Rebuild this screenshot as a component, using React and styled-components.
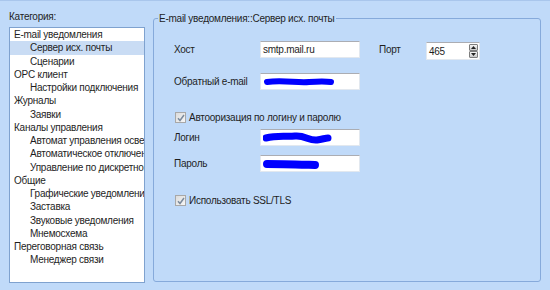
import styled, { createGlobalStyle } from 'styled-components';

const Global = createGlobalStyle`
  body {
    margin: 0;
    background: #c0daf9;
  }
`;

const Window = styled.div`
  width: 550px;
  height: 290px;
  box-sizing: border-box;
  border-top: 1px solid #a9c6ec;
  background: #c0daf9;
  display: flex;
  padding: 0 9px;
  font-family: "Liberation Sans", Arial, sans-serif;
  font-size: 10px;
  letter-spacing: -0.25px;
  color: #1e1e1e;
`;

const Side = styled.div`
  width: 136px;
  flex: none;
  display: flex;
  flex-direction: column;
`;

const Caption = styled.div`
  line-height: 13px;
  margin-top: 9px;
  height: 13px;
`;

const ListBox = styled.div`
  margin-top: 4px;
  height: 256px;
  box-sizing: border-box;
  border: 1px solid #7fa2cf;
  background: #fff;
  overflow: hidden;
`;

const Item = styled.div`
  height: 13.25px;
  line-height: 13px;
  white-space: nowrap;
  overflow: hidden;
  padding-left: ${p => (p.$child ? 20 : 4)}px;
  background: ${p => (p.$active ? '#c9dcf4' : 'transparent')};
`;

const Group = styled.fieldset`
  margin: 11px 0 0 8px;
  padding: 0;
  width: 388px;
  flex: none;
  height: 270px;
  box-sizing: border-box;
  border: 1px solid #86aadb;
  border-radius: 3px;
  min-inline-size: 0;
`;

const Legend = styled.legend`
  margin-left: 4px;
  padding: 0 2px 0 1px;
  line-height: 13px;
  height: 13px;
`;

const Form = styled.div`
  display: flex;
  flex-direction: column;
  padding-left: 20px;
`;

const Row = styled.div`
  display: flex;
  align-items: center;
  height: 17px;
  margin-top: ${p => p.$top || 0}px;
`;

const Label = styled.div`
  width: ${p => p.$w || 86}px;
  padding-left: ${p => p.$pad || 0}px;
  flex: none;
`;

const Field = styled.div`
  width: ${p => p.$w || 100}px;
  height: ${p => p.$h || 17}px;
  box-sizing: border-box;
  border: 1px solid #e2e8ef;
  border-top-color: #abadb3;
  background: #fff;
  display: flex;
  align-items: center;
  padding-left: 2px;
  flex: none;
  margin-top: ${p => p.$top || 0}px;
  overflow: hidden;
`;

const SpinText = styled.span`
  flex: 1;
`;

const SpinButtons = styled.div`
  width: 9px;
  height: 14px;
  margin-right: 1px;
  display: flex;
  flex-direction: column;
  flex: none;
`;

const SpinBtn = styled.div`
  height: 7px;
  box-sizing: border-box;
  border: 1px solid #7d7d7d;
  border-radius: 1px;
  background: linear-gradient(#f6f6f6, #c9c9c9);
  display: flex;
  align-items: center;
  justify-content: center;
`;

const Check = styled.div`
  display: flex;
  align-items: center;
  gap: 3px;
  padding-left: 1px;
  height: 13px;
  margin-top: ${p => p.$top || 0}px;
`;

const Box = styled.span`
  width: 11px;
  height: 11px;
  box-sizing: border-box;
  border: 1px solid #a8a8a8;
  background: linear-gradient(135deg, #dcdcdc, #f6f6f6);
  display: flex;
  align-items: center;
  justify-content: center;
`;

const items = [
  { t: 'E-mail уведомления' },
  { t: 'Сервер исх. почты', c: 1, a: 1 },
  { t: 'Сценарии', c: 1 },
  { t: 'OPC клиент' },
  { t: 'Настройки подключения', c: 1 },
  { t: 'Журналы' },
  { t: 'Заявки', c: 1 },
  { t: 'Каналы управления' },
  { t: 'Автомат управления освещением', c: 1 },
  { t: 'Автоматическое отключение', c: 1 },
  { t: 'Управление по дискретному входу', c: 1 },
  { t: 'Общие' },
  { t: 'Графические уведомления', c: 1 },
  { t: 'Заставка', c: 1 },
  { t: 'Звуковые уведомления', c: 1 },
  { t: 'Мнемосхема', c: 1 },
  { t: 'Переговорная связь' },
  { t: 'Менеджер связи', c: 1 },
];

function Tick() {
  return (
    <svg width="8" height="8" viewBox="0 0 8 8">
      <path d="M1 4.2 L3 6.5 L7 1" fill="none" stroke="#7b8a9c" strokeWidth="1.5" />
    </svg>
  );
}

function Scribble({ d, w, h = 14, sw = 6 }) {
  return (
    <svg width={w} height={h} viewBox={`0 0 ${w} ${h}`}>
      <path d={d} fill="none" stroke="#0000ff" strokeWidth={sw} strokeLinecap="round" strokeLinejoin="round" />
    </svg>
  );
}

export default function App() {
  return (
    <>
      <Global />
      <Window>
        <Side>
          <Caption>Категория:</Caption>
          <ListBox>
            {items.map((it, i) => (
              <Item key={i} $child={it.c} $active={it.a}>
                {it.t}
              </Item>
            ))}
          </ListBox>
        </Side>

        <Group>
          <Legend>E-mail уведомления::Сервер исх. почты</Legend>
          <Form>
            <Row $top={16}>
              <Label>Хост</Label>
              <Field>smtp.mail.ru</Field>
              <Label $w={47} $pad={19}>Порт</Label>
              <Field $w={54} $h={18} $top={3}>
                <SpinText>465</SpinText>
                <SpinButtons>
                  <SpinBtn>
                    <svg width="5" height="3" viewBox="0 0 5 3"><path d="M0 3 L2.5 0 L5 3Z" fill="#222" /></svg>
                  </SpinBtn>
                  <SpinBtn>
                    <svg width="5" height="3" viewBox="0 0 5 3"><path d="M0 0 L2.5 3 L5 0Z" fill="#222" /></svg>
                  </SpinBtn>
                </SpinButtons>
              </Field>
            </Row>
            <Row $top={15}>
              <Label>Обратный e-mail</Label>
              <Field>
                <Scribble w={72} d="M4 7 C 20 5, 34 8, 46 7 S 62 6, 68 7" sw={6} />
              </Field>
            </Row>
            <Check $top={21}>
              <Box><Tick /></Box>
              Автооризация по логину и паролю
            </Check>
            <Row $top={5}>
              <Label>Логин</Label>
              <Field>
                <Scribble w={70} d="M3 7 C 14 4, 24 6, 32 5 C 42 4, 46 10, 54 9 C 60 8, 63 7, 65 7" sw={7} />
              </Field>
            </Row>
            <Row $top={9}>
              <Label>Пароль</Label>
              <Field>
                <Scribble w={60} d="M4 7 C 18 7, 34 7.5, 52 8" sw={8} />
              </Field>
            </Row>
            <Check $top={22}>
              <Box><Tick /></Box>
              Использовать SSL/TLS
            </Check>
          </Form>
        </Group>
      </Window>
    </>
  );
}
